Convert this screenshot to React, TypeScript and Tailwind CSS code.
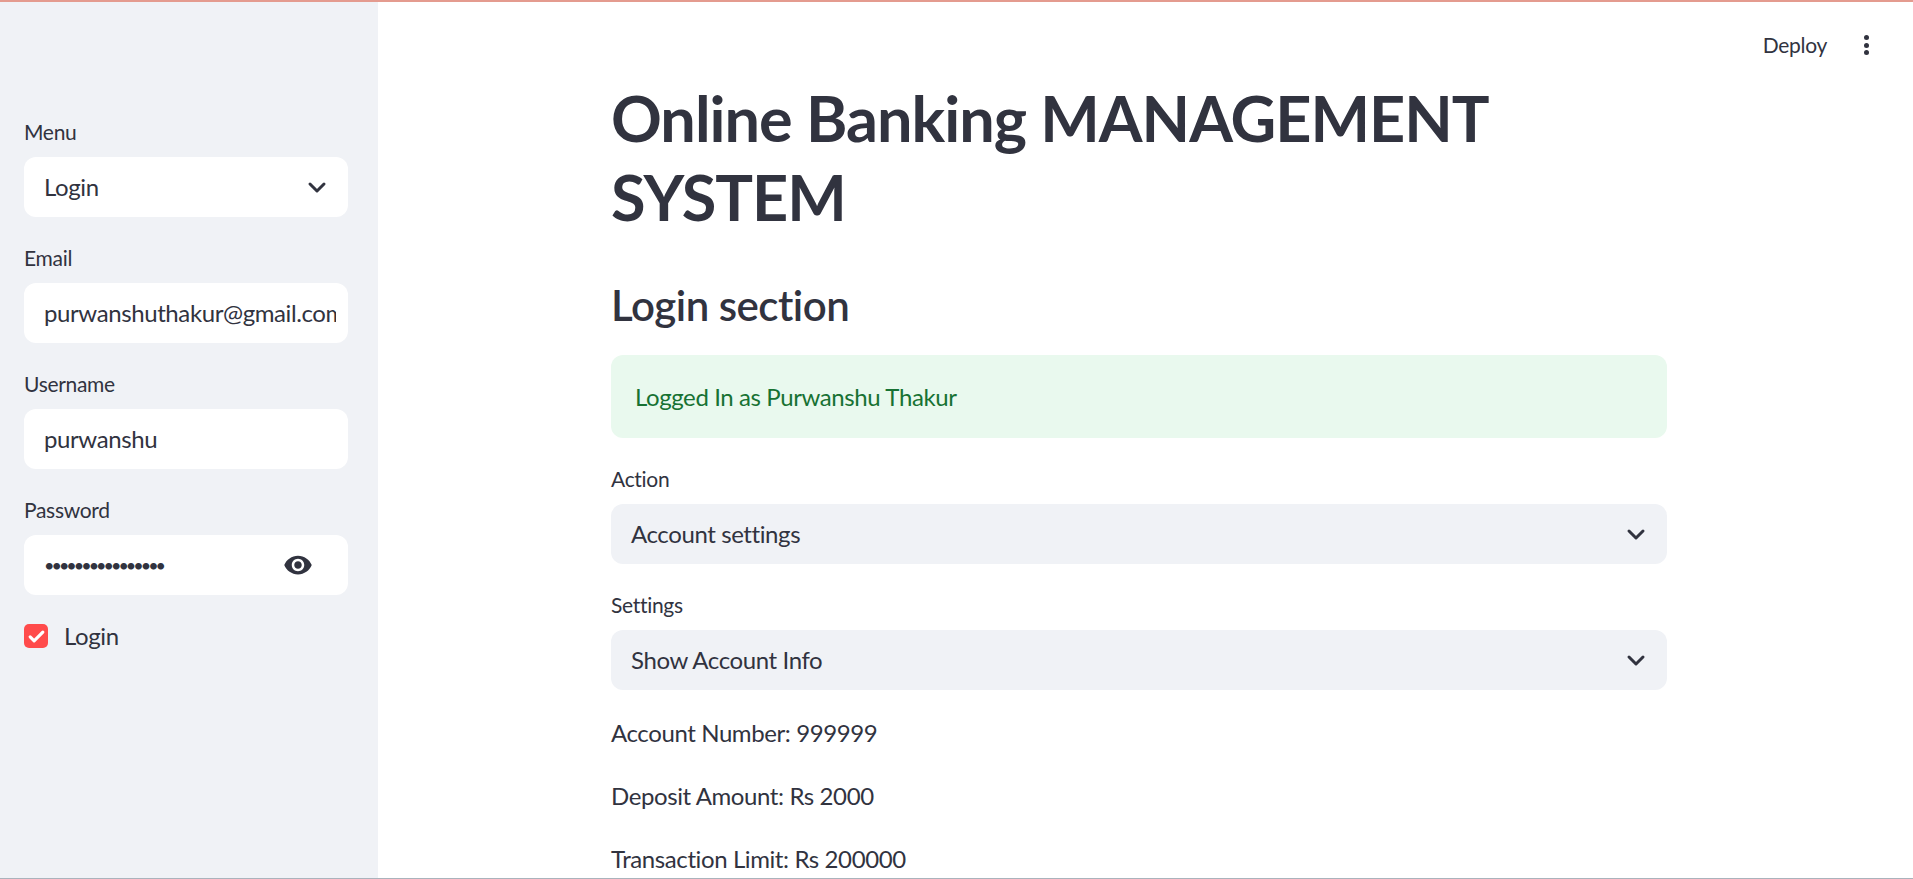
import React from 'react';

const font = { fontFamily: 'Lato, "Liberation Sans", sans-serif' };

const Chevron = () => (
  <svg width="24" height="24" viewBox="0 0 24 24" fill="none" stroke="#31333f" strokeWidth="3" strokeLinecap="round" strokeLinejoin="round">
    <path d="M5 9l7 7 7-7" />
  </svg>
);

const Eye = () => (
  <svg width="30" height="30" viewBox="0 0 24 24" fill="#31333f">
    <path d="M12 4.5C7 4.5 2.73 7.61 1 12c1.73 4.39 6 7.5 11 7.5s9.27-3.11 11-7.5c-1.73-4.39-6-7.5-11-7.5zM12 17c-2.76 0-5-2.24-5-5s2.24-5 5-5 5 2.24 5 5-2.24 5-5 5zm0-8c-1.66 0-3 1.34-3 3s1.34 3 3 3 3-1.34 3-3-1.34-3-3-3z" />
  </svg>
);

const Label = ({ children }: { children: React.ReactNode }) => (
  <div className="h-[30px] flex items-center text-[21px] tracking-[-0.3px] text-[#31333f]">{children}</div>
);

const SelectBox = ({ value, light }: { value: string; light?: boolean }) => (
  <div className={`mt-[10px] h-[60px] rounded-xl flex items-center justify-between pl-[20px] pr-[19px] text-[24px] tracking-[-0.4px] text-[#31333f] ${light ? 'bg-white' : 'bg-[#f0f2f6]'}`}>
    <span>{value}</span>
    <Chevron />
  </div>
);

const TextBox = ({ value }: { value: string }) => (
  <div className="mt-[10px] h-[60px] rounded-xl bg-white flex items-center pl-[20px] pr-[12px] text-[24px] tracking-[-0.4px] text-[#31333f]">
    <div className="overflow-hidden whitespace-nowrap">{value}</div>
  </div>
);

export default function App() {
  return (
    <div className="relative h-screen w-full flex border-b border-[#aab3bc] bg-white" style={font}>
      {/* decoration line over the top */}
      <div className="absolute top-0 left-0 right-0 h-[2px] bg-[#e49b8f]" />

      {/* Sidebar */}
      <aside className="w-[378px] shrink-0 bg-[#f0f2f6] pl-6 pr-[30px] pt-[117px] flex flex-col gap-[26px]">
        <div>
          <Label>Menu</Label>
          <SelectBox value="Login" light />
        </div>
        <div>
          <Label>Email</Label>
          <TextBox value="purwanshuthakur@gmail.com" />
        </div>
        <div>
          <Label>Username</Label>
          <TextBox value="purwanshu" />
        </div>
        <div>
          <Label>Password</Label>
          <div className="mt-[10px] h-[60px] rounded-xl bg-white flex items-center justify-between pl-[20px] pr-[35px] text-[#31333f]">
            <span className="text-[18px] tracking-[-3px]">••••••••••••••••</span>
            <Eye />
          </div>
        </div>
        <div className="h-[30px] flex items-center gap-4">
          <div className="w-6 h-6 rounded-[5px] bg-[#ff4b4b] flex items-center justify-center">
            <svg width="19" height="19" viewBox="0 0 24 24" fill="none" stroke="white" strokeWidth="4" strokeLinecap="round" strokeLinejoin="round">
              <path d="M4 12.5l5 5L20 6.5" />
            </svg>
          </div>
          <span className="text-[24px] tracking-[-0.4px] text-[#31333f]">Login</span>
        </div>
      </aside>

      {/* Main */}
      <main className="flex-1 flex flex-col">
        <div className="h-[78px] flex justify-end items-start pt-[33px] pr-[32px] gap-[24px]">
          <span className="text-[21px] leading-[24px] tracking-[-0.3px] text-[#31333f]">Deploy</span>
          <div className="w-[30px] h-[24px] flex flex-col items-center justify-center gap-[2.5px]">
            <div className="w-[5px] h-[5px] rounded-full bg-[#31333f]" />
            <div className="w-[5px] h-[5px] rounded-full bg-[#31333f]" />
            <div className="w-[5px] h-[5px] rounded-full bg-[#31333f]" />
          </div>
        </div>

        <div className="ml-[233px] w-[1056px] text-[#31333f]">
          <h1 className="text-[63px] leading-[79px] tracking-[-1px] font-bold">Online Banking MANAGEMENT SYSTEM</h1>

          <h2 className="mt-[44px] text-[42px] leading-[50px] tracking-[-0.5px] font-semibold">Login section</h2>

          <div className="mt-[25px] h-[83px] rounded-xl bg-[#e9f9ee] flex items-center px-6 text-[24px] tracking-[-0.4px] text-[#177233]">
            Logged In as Purwanshu Thakur
          </div>

          <div className="mt-[26px]">
            <Label>Action</Label>
            <SelectBox value="Account settings" />
          </div>

          <div className="mt-[26px]">
            <Label>Settings</Label>
            <SelectBox value="Show Account Info" />
          </div>

          <div className="mt-[25px] flex flex-col gap-[27px] text-[24px] leading-[36px] tracking-[-0.4px]">
            <p>Account Number: 999999</p>
            <p>Deposit Amount: Rs 2000</p>
            <p>Transaction Limit: Rs 200000</p>
          </div>
        </div>
      </main>
    </div>
  );
}
